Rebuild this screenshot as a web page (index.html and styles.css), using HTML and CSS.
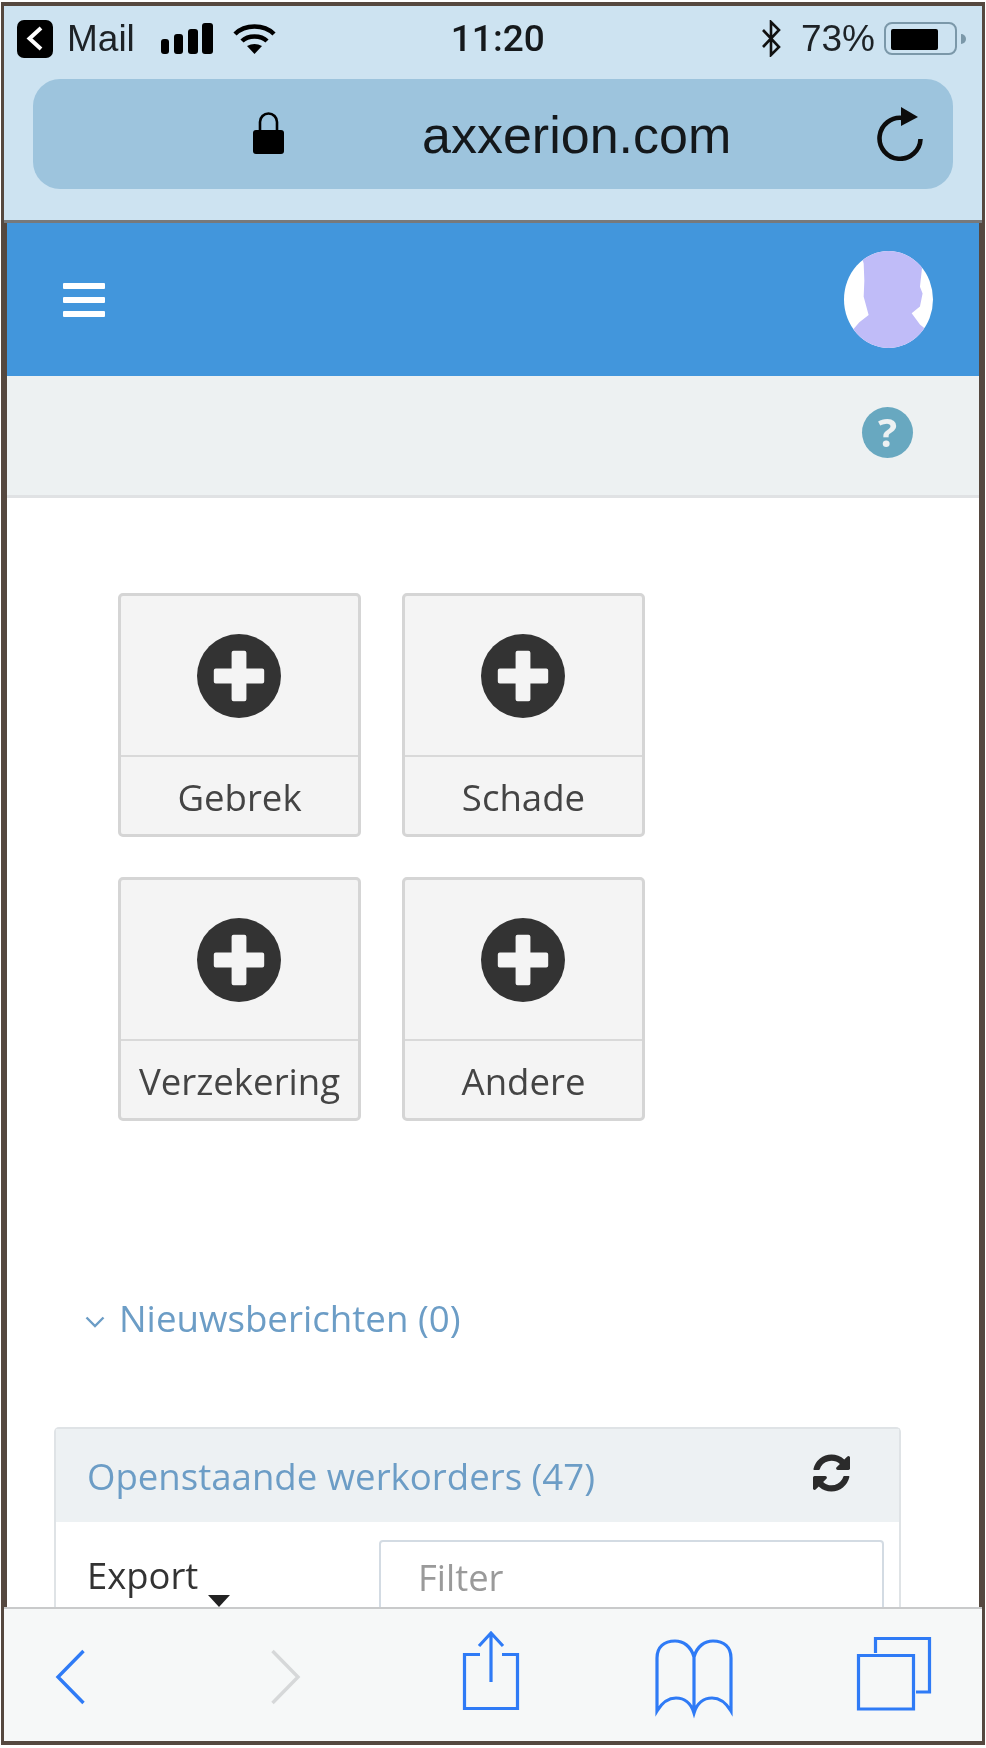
FILE: index.html
```html
<!DOCTYPE html>
<html lang="nl">
<head>
<meta charset="utf-8">
<title>axxerion.com</title>
<link rel="stylesheet" href="styles.css">
</head>
<body>
<div class="frame">
  <div class="chrome">
    <div class="status">
      <div class="status-left">
        <span class="back-app"><svg class="back-app-icon" viewBox="0 0 36 38"><path d="M24 8 L12.5 18.5 L24 29" fill="none" stroke="#fff" stroke-width="4"/></svg></span>
        <span class="status-text mail">Mail</span>
        <svg class="signal" viewBox="0 0 52 31"><rect x="0" y="16" width="8" height="15" rx="3"/><rect x="13" y="11" width="9" height="20" rx="3"/><rect x="27" y="6" width="10" height="25" rx="3"/><rect x="41" y="0" width="11" height="31" rx="3"/></svg>
        <svg class="wifi" viewBox="0 0 43 30"><path d="M2 10 C12 0 31 0 41 10" fill="none" stroke="#000" stroke-width="4.5"/><path d="M9 17 C15 11 28 11 34 17" fill="none" stroke="#000" stroke-width="4.5"/><path d="M14 22 Q21.5 18 29 22 L21.5 30 Z"/></svg>
      </div>
      <span class="time">11:20</span>
      <div class="status-right">
        <svg class="bt" viewBox="0 0 21 37"><path d="M2 10 L18 27 L10 35 V2 L18 10 L2 27" fill="none" stroke="#111" stroke-width="2.6"/></svg>
        <span class="status-text pct">73%</span>
        <span class="battery"><span class="battery-fill"></span></span>
        <span class="battery-nub"></span>
      </div>
    </div>
    <div class="urlbar">
      <svg class="lock" viewBox="0 0 31 42"><rect x="0" y="18" width="31" height="24" rx="3"/><path d="M7 19 V10 a8.5 8.5 0 0 1 17 0 V19" fill="none" stroke="#000" stroke-width="2.6"/></svg>
      <span class="url">axxerion.com</span>
      <svg class="reload" viewBox="0 0 46 54"><path d="M26 11 A 20.5 20.5 0 1 0 43.5 32" fill="none" stroke="#0c0c0c" stroke-width="4.6"/><path d="M24 0 L41 10 L24 19 Z" fill="#0c0c0c"/></svg>
    </div>
  </div>
  <div class="page">
    <header class="appbar">
      <div class="burger"><span></span><span></span><span></span></div>
      <div class="avatar"><svg class="avatar-img" viewBox="0 0 266 293"><path d="M48 0 L58 38 L60 90 L58 138 L73 193 L45 215 L28 235 L28 293 L240 293 L240 232 L228 222 L203 188 L228 168 L236 128 L228 108 L233 63 L240 0 Z"/></svg></div>
    </header>
    <div class="subbar"><span class="help">?</span></div>
    <main class="content">
      <div class="tiles">
        <a class="tile"><span class="tile-icon"><svg class="plus" viewBox="0 0 85 85"><circle cx="42.5" cy="42.5" r="42.5" fill="#333"/><path d="M37 17 h11 a2 2 0 0 1 2 2 v16 h16 a2 2 0 0 1 2 2 v11 a2 2 0 0 1 -2 2 h-16 v16 a2 2 0 0 1 -2 2 h-11 a2 2 0 0 1 -2 -2 v-16 h-16 a2 2 0 0 1 -2 -2 v-11 a2 2 0 0 1 2 -2 h16 v-16 a2 2 0 0 1 2 -2 Z" fill="#f4f4f4"/></svg></span><span class="tile-label">Gebrek</span></a>
        <a class="tile"><span class="tile-icon"><svg class="plus" viewBox="0 0 85 85"><circle cx="42.5" cy="42.5" r="42.5" fill="#333"/><path d="M37 17 h11 a2 2 0 0 1 2 2 v16 h16 a2 2 0 0 1 2 2 v11 a2 2 0 0 1 -2 2 h-16 v16 a2 2 0 0 1 -2 2 h-11 a2 2 0 0 1 -2 -2 v-16 h-16 a2 2 0 0 1 -2 -2 v-11 a2 2 0 0 1 2 -2 h16 v-16 a2 2 0 0 1 2 -2 Z" fill="#f4f4f4"/></svg></span><span class="tile-label">Schade</span></a>
        <a class="tile"><span class="tile-icon"><svg class="plus" viewBox="0 0 85 85"><circle cx="42.5" cy="42.5" r="42.5" fill="#333"/><path d="M37 17 h11 a2 2 0 0 1 2 2 v16 h16 a2 2 0 0 1 2 2 v11 a2 2 0 0 1 -2 2 h-16 v16 a2 2 0 0 1 -2 2 h-11 a2 2 0 0 1 -2 -2 v-16 h-16 a2 2 0 0 1 -2 -2 v-11 a2 2 0 0 1 2 -2 h16 v-16 a2 2 0 0 1 2 -2 Z" fill="#f4f4f4"/></svg></span><span class="tile-label">Verzekering</span></a>
        <a class="tile"><span class="tile-icon"><svg class="plus" viewBox="0 0 85 85"><circle cx="42.5" cy="42.5" r="42.5" fill="#333"/><path d="M37 17 h11 a2 2 0 0 1 2 2 v16 h16 a2 2 0 0 1 2 2 v11 a2 2 0 0 1 -2 2 h-16 v16 a2 2 0 0 1 -2 2 h-11 a2 2 0 0 1 -2 -2 v-16 h-16 a2 2 0 0 1 -2 -2 v-11 a2 2 0 0 1 2 -2 h16 v-16 a2 2 0 0 1 2 -2 Z" fill="#f4f4f4"/></svg></span><span class="tile-label">Andere</span></a>
      </div>
      <div class="news">
        <svg class="news-chevron" viewBox="0 0 20 12"><path d="M1.5 1.5 L10 10 L18.5 1.5" fill="none" stroke="#6c9dc6" stroke-width="2.4"/></svg>
        <span class="news-title">Nieuwsberichten (0)</span>
      </div>
      <section class="panel">
        <div class="panel-head">
          <span class="panel-title">Openstaande werkorders (47)</span>
          <svg class="refresh" viewBox="0 0 1536 1536"><path fill="#2b2b2b" d="M1511 928q0 5-1 7-64 268-268 434.5t-478 166.5q-146 0-282.5-55t-243.5-157l-129 129q-19 19-45 19t-45-19-19-45v-448q0-26 19-45t45-19h448q26 0 45 19t19 45-19 45l-137 137q71 66 161 102t187 36q134 0 250-65t186-179q11-17 53-117 8-23 30-23h192q13 0 22.5 9.5t9.5 22.5zm25-800v448q0 26-19 45t-45 19h-448q-26 0-45-19t-19-45 19-45l138-138q-148-137-349-137-134 0-250 65t-186 179q-11 17-53 117-8 23-30 23h-199q-13 0-22.5-9.5t-9.5-22.5v-7q65-268 270-434.5t480-166.5q146 0 284 55.5t245 156.5l130-129q19-19 45-19t45 19 19 45z"/></svg>
        </div>
        <div class="panel-body">
          <div class="export"><span class="export-label">Export</span><span class="caret"></span></div>
          <div class="filter">Filter</div>
        </div>
      </section>
    </main>
  </div>
  <nav class="toolbar">
    <svg class="tb tb-back" viewBox="0 0 31 100"><path d="M28.5 26 L3 52 L28.5 78" fill="none" stroke="#2f7bf6" stroke-width="3.4"/></svg>
    <svg class="tb tb-forward" viewBox="0 0 31 100"><path d="M2.5 26 L28 52 L2.5 78" fill="none" stroke="#d6d8d9" stroke-width="3.4"/></svg>
    <svg class="tb tb-share" viewBox="0 0 64 100"><path d="M21 29.5 H5.5 V83.5 H58.5 V29.5 H43 M32 9 V57 M20 21 L32 8 L44 21" fill="none" stroke="#2f7bf6" stroke-width="3.2"/></svg>
    <svg class="tb tb-book" viewBox="0 0 80 100"><path d="M40 32 C37 21 29 16 21 16 C10 16 3 22 3 33 V86 C9 76 15 73 22 73 C30 73 37 78 40 88 C43 78 50 73 58 73 C65 73 71 76 77 86 V33 C77 22 70 16 59 16 C51 16 43 21 40 32 Z M40 32 V88" fill="none" stroke="#2f7bf6" stroke-width="3.2"/></svg>
    <svg class="tb tb-tabs" viewBox="0 0 80 100"><path d="M4.5 30.5 H59.5 V84 H4.5 Z M21.5 28 V13.5 H75.5 V67 H62" fill="none" stroke="#2f7bf6" stroke-width="3.2"/></svg>
  </nav>
</div>
</body>
</html>
```

FILE: styles.css
```css
* { box-sizing: border-box; }
html, body { margin: 0; padding: 0; background: #fff; }
body { height: 1748px; overflow: hidden; padding: 2px 1px 0; }

.frame {
  height: 1743px;
  border: 4px solid #55483f;
  border-left-width: 3px;
  border-right-width: 3px;
  display: flex;
  flex-direction: column;
  overflow: hidden;
  filter: blur(0.7px);
}

/* iOS chrome */
.chrome { background: #cde3f1; border-bottom: 3px solid #77797b; flex: none; height: 217px; }
.status { height: 73px; display: flex; align-items: center; padding: 0 16px 8px 13px; color: #1d2226; }
.status-left { display: flex; align-items: center; flex: none; }
.back-app { width: 36px; height: 38px; background: #000; border-radius: 7px; display: flex; }
.back-app-icon { width: 36px; height: 38px; }
.status-text { font: 37px/40px "Liberation Sans", Arial, sans-serif; color: #1d2226; }
.mail { margin-left: 14px; }
.signal { width: 52px; height: 31px; margin-left: 26px; }
.wifi { width: 43px; height: 30px; margin-left: 20px; }
.time { font: 500 37px/40px Roboto, sans-serif; margin-left: 175px; color: #15191c; }
.status-right { margin-left: auto; display: flex; align-items: center; }
.bt { width: 21px; height: 37px; }
.pct { margin-left: 19px; }
.battery { width: 73px; height: 33px; border: 2px solid #7b98a9; border-radius: 8px; margin-left: 9px; padding: 5px; display: flex; }
.battery-fill { width: 47px; height: 21px; background: #000; border-radius: 2px; }
.battery-nub { width: 5px; height: 10px; background: #7b98a9; border-radius: 0 5px 5px 0; margin-left: 4px; }

.urlbar { height: 110px; margin: 0 29px; padding: 0 30px 0 220px; background: #9dc4dd; border-radius: 27px; display: flex; align-items: center; }
.lock { width: 31px; height: 42px; margin-bottom: 2px; }
.url { font: 52px/58px "Liberation Sans", Arial, sans-serif; color: #14181b; margin-left: 138px; margin-top: 2px; }
.reload { width: 46px; height: 54px; margin-left: auto; }

/* Page */
.page { flex: 1; min-height: 0; display: flex; flex-direction: column; border-left: 3px solid #55483f; border-right: 3px solid #55483f; background: #fff; }
.appbar { height: 153px; flex: none; background: #4296dc; display: flex; align-items: center; justify-content: space-between; padding: 0 46px 0 56px; }
.burger { width: 42px; display: flex; flex-direction: column; gap: 8px; }
.burger span { height: 6px; background: #fff; border-radius: 1px; }
.avatar { width: 89px; height: 97px; border-radius: 50%; overflow: hidden; background: #fff; }
.avatar-img { display: block; width: 89px; height: 97px; fill: #c0bcf8; }

.subbar { height: 122px; flex: none; background: #edf1f2; border-bottom: 3px solid #e0e2e4; display: flex; justify-content: flex-end; padding: 31px 66px 0 0; }
.help { width: 51px; height: 51px; border-radius: 50%; background: #68a8c0; color: #edf1f2; font: 700 40px/49px "Open Sans", sans-serif; text-align: center; }

.content { flex: 1; min-height: 0; overflow: hidden; font-family: "Open Sans", sans-serif; }
.tiles { display: grid; grid-template-columns: 243px 243px; grid-auto-rows: 244px; gap: 40px 41px; padding: 95px 0 0 111px; }
.tile { display: flex; flex-direction: column; border: 3px solid #d5d5d5; border-radius: 5px; background: #f4f4f4; }
.tile-icon { height: 161px; flex: none; display: flex; justify-content: center; padding: 38px 2px 0 0; border-bottom: 2px solid #d9d9d9; }
.plus { width: 84px; height: 84px; }
.tile-label { flex: 1; text-align: center; font-size: 36.6px; line-height: 80px; color: #444; white-space: nowrap; }

.news { display: flex; align-items: center; margin: 159px 0 0 78px; height: 76px; }
.news-chevron { width: 20px; height: 12px; margin-top: 8px; flex: none; }
.news-title { margin-left: 14px; font-size: 36.7px; color: #6c9dc6; }

.panel { margin: 71px 0 0 47px; width: 847px; border: 2px solid #dfe3e6; border-bottom: 0; border-radius: 5px 5px 0 0; }
.panel-head { height: 93px; background: #edf1f3; display: flex; align-items: center; justify-content: space-between; padding: 0 49px 0 31px; }
.panel-title { font-size: 36.6px; color: #6c9dc6; }
.refresh { width: 37px; height: 38px; margin-bottom: 5px; }
.panel-body { display: flex; padding: 18px 15px 0 31px; height: 200px; }
.export { width: 292px; flex: none; color: #333; font-size: 36.4px; position: relative; }
.export-label { display: block; line-height: 50px; margin-top: 10px; }
.caret { position: absolute; left: 121px; top: 55px; width: 0; height: 0; border-left: 11px solid transparent; border-right: 11px solid transparent; border-top: 12px solid #222; }
.filter { flex: 1; height: 120px; border: 2px solid #d3dbe3; border-radius: 4px; padding: 10px 0 0 37px; font-size: 36.4px; line-height: 50px; color: #9a9a9a; }

/* Toolbar */
.toolbar { flex: none; height: 134px; border-top: 2px solid #c9cacb; background: #f6f8f8; display: flex; align-items: flex-start; padding-top: 16px; }
.tb { height: 100px; flex: none; }
.tb-back { width: 31px; margin-left: 51px; }
.tb-forward { width: 31px; margin-left: 184px; }
.tb-share { width: 64px; margin-left: 158px; }
.tb-book { width: 80px; margin-left: 131px; }
.tb-tabs { width: 80px; margin-left: 120px; }
```
